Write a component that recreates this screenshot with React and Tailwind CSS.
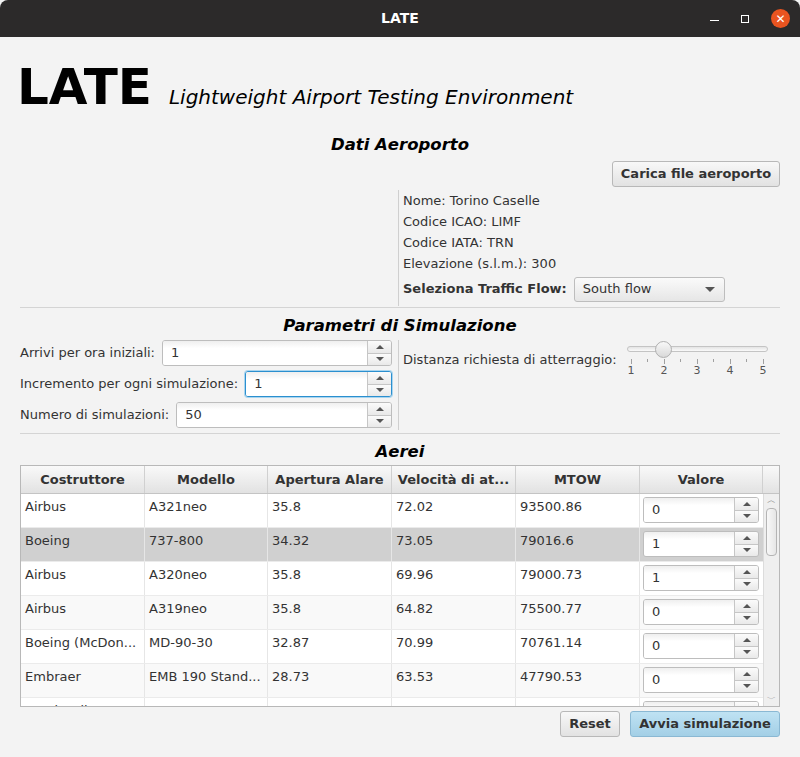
import React from 'react';

const rows = [
    { maker: 'Airbus', model: 'A321neo', span: '35.8', speed: '72.02', mtow: '93500.86', value: '0', bg: 'bg-white' },
    { maker: 'Boeing', model: '737-800', span: '34.32', speed: '73.05', mtow: '79016.6', value: '1', bg: 'bg-[#d0d0d0]' },
    { maker: 'Airbus', model: 'A320neo', span: '35.8', speed: '69.96', mtow: '79000.73', value: '1', bg: 'bg-white' },
    { maker: 'Airbus', model: 'A319neo', span: '35.8', speed: '64.82', mtow: '75500.77', value: '0', bg: 'bg-[#f9f9f9]' },
    { maker: 'Boeing (McDon...', model: 'MD-90-30', span: '32.87', speed: '70.99', mtow: '70761.14', value: '0', bg: 'bg-white' },
    { maker: 'Embraer', model: 'EMB 190 Stand...', span: '28.73', speed: '63.53', mtow: '47790.53', value: '0', bg: 'bg-[#f9f9f9]' },
    { maker: 'Bombardier', model: 'CRJ-900', span: '24.85', speed: '68.21', mtow: '38330.0', value: '0', bg: 'bg-white' },
];

function Tri({ up }) {
    return up ? (
        <div className="w-0 h-0 border-x-[4px] border-x-transparent border-b-[4px] border-b-[#555]" />
    ) : (
        <div className="w-0 h-0 border-x-[4px] border-x-transparent border-t-[4px] border-t-[#555]" />
    );
}

function Spinner({ value, className = '', focused = false }) {
    return (
        <div
            className={`flex h-[26px] rounded-[3px] border overflow-hidden ${
                focused ? 'border-[#2b8fcf] shadow-[0_0_0_1px_#a9d5ef]' : 'border-[#bdbdbd]'
            } ${className}`}
        >
            <div className="flex-1 flex items-center pl-[8px] bg-linear-to-b from-[#efefef] to-white to-[30%] text-[13px] text-[#333]">
                {value}
            </div>
            <div className="w-[24px] flex flex-col border-l border-[#c6c6c6]">
                <div className="flex-1 flex items-center justify-center bg-linear-to-b from-[#fbfbfb] to-[#e9e9e9] border-b border-[#c6c6c6]">
                    <Tri up />
                </div>
                <div className="flex-1 flex items-center justify-center bg-linear-to-b from-[#fbfbfb] to-[#e9e9e9]">
                    <Tri />
                </div>
            </div>
        </div>
    );
}

function Button({ children, blue = false, className = '' }) {
    return (
        <div
            className={`h-[26px] flex items-center justify-center rounded-[3px] border text-[13px] font-bold text-[#333] ${
                blue
                    ? 'border-[#8ab8d3] bg-linear-to-b from-[#bfe2f3] to-[#a3cfe6]'
                    : 'border-[#b8b8b8] bg-linear-to-b from-[#f8f8f8] to-[#e2e2e2]'
            } ${className}`}
        >
            {children}
        </div>
    );
}

function SectionTitle({ children }) {
    return (
        <div className="h-[20px] flex items-center justify-center text-[16.5px] font-bold italic text-black">
            {children}
        </div>
    );
}

export default function App() {
    const cols = ['w-[124px]', 'w-[123px]', 'w-[124px]', 'w-[124px]', 'w-[124px]', 'w-[123px]'];
    const heads = ['Costruttore', 'Modello', 'Apertura Alare', 'Velocità di at...', 'MTOW', 'Valore'];

    return (
        <div className="w-[800px] h-[757px] bg-[#f3f3f3] font-['DejaVu_Sans',sans-serif] text-[#333] overflow-hidden">
            {/* Window title bar */}
            <div className="h-[37px] bg-[#2c2a2a] rounded-t-[8px] flex items-center justify-center relative">
                <span className="text-white text-[14px] font-bold">LATE</span>
                <div className="absolute right-[10px] top-0 h-[37px] flex items-center gap-[22px]">
                    <div className="w-[9px] h-[1px] bg-white mt-[4px]" />
                    <div className="w-[8px] h-[8px] border border-white" />
                    <div className="w-[19px] h-[19px] rounded-full bg-[#e95420] flex items-center justify-center text-white text-[12px] leading-none">
                        ✕
                    </div>
                </div>
            </div>

            <div className="px-[20px]">
                {/* Header */}
                <div className="h-[98px] pt-[25px] flex items-baseline">
                    <span className="text-[50px] font-bold leading-none text-black -ml-[3px]">LATE</span>
                    <span className="ml-[17px] text-[20px] italic text-black">Lightweight Airport Testing Environment</span>
                </div>

                {/* Dati Aeroporto */}
                <SectionTitle>Dati Aeroporto</SectionTitle>
                <div className="flex justify-end mt-[6px]">
                    <Button className="w-[168px]">Carica file aeroporto</Button>
                </div>
                <div className="flex mt-[3px]">
                    <div className="w-[378px]" />
                    <div className="border-l border-[#cfcfcf] pl-[4px] pb-[4px] text-[13px]">
                        <div className="h-[21px] flex items-center">Nome: Torino Caselle</div>
                        <div className="h-[21px] flex items-center">Codice ICAO: LIMF</div>
                        <div className="h-[21px] flex items-center">Codice IATA: TRN</div>
                        <div className="h-[21px] flex items-center">Elevazione (s.l.m.): 300</div>
                        <div className="h-[26px] mt-[2px] flex items-center">
                            <span className="font-bold">Seleziona Traffic Flow:</span>
                            <div className="ml-[7px] w-[151px] h-[25px] rounded-[3px] border border-[#bdbdbd] bg-linear-to-b from-[#fafafa] to-[#e6e6e6] flex items-center justify-between pl-[8px] pr-[9px]">
                                <span>South flow</span>
                                <div className="w-0 h-0 border-x-[5px] border-x-transparent border-t-[5px] border-t-[#555]" />
                            </div>
                        </div>
                    </div>
                </div>
                <div className="h-[1px] bg-[#d4d4d4] mt-[1px]" />

                {/* Parametri di Simulazione */}
                <div className="mt-[8px]">
                    <SectionTitle>Parametri di Simulazione</SectionTitle>
                </div>
                <div className="flex mt-[4px]">
                    <div className="w-[378px] pr-[6px] flex flex-col gap-[5px] text-[13px]">
                        <div className="flex items-center gap-[7px]">
                            <span>Arrivi per ora iniziali:</span>
                            <Spinner value="1" className="flex-1" />
                        </div>
                        <div className="flex items-center gap-[7px]">
                            <span>Incremento per ogni simulazione:</span>
                            <Spinner value="1" className="flex-1" focused />
                        </div>
                        <div className="flex items-center gap-[7px]">
                            <span>Numero di simulazioni:</span>
                            <Spinner value="50" className="flex-1" />
                        </div>
                    </div>
                    <div className="border-l border-[#cfcfcf] pl-[4px] h-[90px] flex items-start text-[13px]">
                        <span className="mt-[10px]">Distanza richiesta di atterraggio:</span>
                        <div className="ml-[10px] w-[141px] mt-[2px]">
                            <div className="relative h-[14px]">
                                <div className="absolute left-0 right-0 top-[4px] h-[6px] rounded-full border border-[#c4c4c4] bg-linear-to-b from-[#e4e4e4] to-[#fafafa]" />
                                <div className="absolute left-[28px] top-[-1px] w-[17px] h-[17px] rounded-full border border-[#b0b0b0] bg-linear-to-b from-[#f8f8f8] to-[#d9d9d9]" />
                            </div>
                            <div className="flex justify-between px-[4px] mt-[3px] h-[5px]">
                                {[1, 0, 1, 0, 1, 0, 1, 0, 1].map((m, i) => (
                                    <div key={i} className={`w-[1px] bg-[#a0a0a0] ${m ? 'h-[5px]' : 'h-[3px]'}`} />
                                ))}
                            </div>
                            <div className="flex justify-between px-[1px] text-[11px] text-[#555] leading-[14px]">
                                <span>1</span>
                                <span>2</span>
                                <span>3</span>
                                <span>4</span>
                                <span>5</span>
                            </div>
                        </div>
                    </div>
                </div>
                <div className="h-[1px] bg-[#d4d4d4] mt-[3px]" />

                {/* Aerei */}
                <div className="mt-[8px]">
                    <SectionTitle>Aerei</SectionTitle>
                </div>
                <div className="mt-[3px] h-[242px] border border-[#b8b8b8] bg-white overflow-hidden text-[13px]">
                    <div className="flex h-[28px] bg-linear-to-b from-[#f9f9f9] to-[#e2e2e2] border-b border-[#c4c4c4]">
                        {heads.map((h, i) => (
                            <div key={i} className={`${cols[i]} border-r border-[#d0d0d0] flex items-center justify-center font-bold`}>
                                {h}
                            </div>
                        ))}
                        <div className="flex-1" />
                    </div>
                    <div className="flex h-[212px]">
                        <div className="w-[742px] overflow-hidden">
                            {rows.map((r, idx) => (
                                <div key={idx} className={`flex h-[34px] border-b border-[#ebebeb] ${r.bg}`}>
                                    {[r.maker, r.model, r.span, r.speed, r.mtow].map((c, i) => (
                                        <div key={i} className={`${cols[i]} border-r border-[#e6e6e6] pl-[4px] pt-[3px] whitespace-nowrap`}>
                                            {c}
                                        </div>
                                    ))}
                                    <div className={`${cols[5]} pl-[3px] pt-[3px]`}>
                                        <Spinner value={r.value} className="w-[116px]" />
                                    </div>
                                </div>
                            ))}
                        </div>
                        <div className="flex-1 bg-[#efefef] border-l border-[#dcdcdc] flex flex-col items-center">
                            <div className="h-[12px] text-[9px] leading-[12px] text-[#888]">︿</div>
                            <div className="w-[11px] h-[48px] mt-[2px] rounded-[4px] border border-[#b4b4b4] bg-linear-to-r from-[#f8f8f8] to-[#e6e6e6]" />
                            <div className="flex-1" />
                            <div className="h-[14px] text-[9px] leading-[14px] text-[#888]">﹀</div>
                        </div>
                    </div>
                </div>

                {/* Bottom buttons */}
                <div className="flex justify-end gap-[10px] mt-[4px]">
                    <Button className="w-[60px]">Reset</Button>
                    <Button blue className="w-[150px]">Avvia simulazione</Button>
                </div>
            </div>
        </div>
    );
}
